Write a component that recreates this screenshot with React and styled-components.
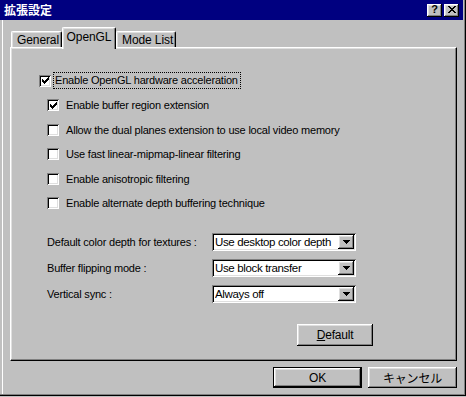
import React from "react";
import styled, { createGlobalStyle } from "styled-components";

const Global = createGlobalStyle`
  html, body { margin: 0; padding: 0; background: #c0c0c0; }
  body { font-family: "Liberation Sans", Arial, sans-serif; font-size: 11px; color: #000; }
  * { box-sizing: border-box; }
`;

const raised = `
  box-shadow: inset -1px -1px #000, inset 1px 1px #fff, inset -2px -2px #808080, inset 2px 2px #dfdfdf;
`;
const sunken = `
  box-shadow: inset 1px 1px #808080, inset -1px -1px #fff, inset 2px 2px #000, inset -2px -2px #dfdfdf;
`;

const Window = styled.div`
  width: 466px;
  height: 396px;
  background: #c0c0c0;
  display: flex;
  flex-direction: column;
  border-right: 1px solid #000;
  border-bottom: 1px solid #000;
  padding: 0 2px 2px 0;
  box-shadow: inset -1px -1px #808080, inset 2px 0 #c0c0c0, inset 3px 0 #fff;
`;

const TitleBar = styled.div`
  height: 20px;
  background: #000080;
  display: flex;
  align-items: center;
  padding: 0 4px 0 4px;
`;

const Title = styled.span`
  flex: 1;
  color: #fff;
  font-family: "Noto Sans CJK JP", "Liberation Sans", sans-serif;
  font-weight: bold;
  font-size: 12px;
  line-height: 20px;
`;

const CaptionButtons = styled.div`
  display: flex;
  gap: 2px;
`;

const CaptionButton = styled.div`
  width: 15px;
  height: 13px;
  background: #c0c0c0;
  ${raised}
  display: flex;
  align-items: center;
  justify-content: center;
  font-family: "Liberation Sans", Arial, sans-serif;
  font-weight: bold;
  font-size: 11px;
  line-height: 1;
  padding-bottom: 1px;
`;

const Content = styled.div`
  flex: 1;
  display: flex;
  flex-direction: column;
  align-items: flex-start;
  padding: 6px 0 0 10px;
`;

const TabStrip = styled.div`
  height: 21px;
  display: flex;
  align-items: flex-end;
  padding-left: 1px;
`;

const Tab = styled.div`
  position: relative;
  width: ${(p) => p.$w}px;
  height: ${(p) => (p.$active ? 22 : 16)}px;
  margin-bottom: ${(p) => (p.$active ? -2 : 0)}px;
  z-index: ${(p) => (p.$active ? 2 : 0)};
  background: #c0c0c0;
  border-top: 1px solid #fff;
  border-left: 1px solid #fff;
  border-right: 1px solid #000;
  border-radius: 2px 2px 0 0;
  box-shadow: inset -1px 0 #808080, inset 1px 1px #dfdfdf;
  display: flex;
  align-items: ${(p) => (p.$active ? "flex-start" : "center")};
  justify-content: ${(p) => (p.$active ? "center" : "flex-start")};
  padding: ${(p) => (p.$active ? "2px 0 0 0" : "0 0 0 5px")};
  font-size: 12px;
  letter-spacing: -0.1px;
`;

const Panel = styled.div`
  width: 447px;
  height: 314px;
  background: #c0c0c0;
  border-top: 1px solid #fff;
  border-left: 1px solid #fff;
  border-right: 1px solid #000;
  border-bottom: 1px solid #000;
  box-shadow: inset -1px -1px #808080, inset 1px 1px #dfdfdf;
  display: flex;
  flex-direction: column;
  align-items: flex-start;
  padding-top: 24px;
`;

const MainRow = styled.div`
  display: flex;
  align-items: center;
  height: 17px;
  margin-left: 28px;
  gap: 2px;
`;

const FocusLabel = styled.span`
  border: 1px dotted #000;
  padding: 0 2px 0 1px;
  height: 17px;
  line-height: 15px;
  letter-spacing: -0.2px;
`;

const SubList = styled.div`
  display: flex;
  flex-direction: column;
  margin: 4px 0 0 36px;
`;

const SubRow = styled.div`
  height: 24.5px;
  display: flex;
  align-items: center;
  gap: 7px;
`;

const Label = styled.span`
  letter-spacing: -0.2px;
  white-space: nowrap;
`;

const Box = styled.div`
  width: 12px;
  height: 12px;
  background: #fff;
  ${sunken}
  display: flex;
  align-items: center;
  justify-content: center;
  flex-shrink: 0;
`;

const Fields = styled.div`
  display: grid;
  grid-template-columns: 165px 144px;
  grid-auto-rows: 18px;
  row-gap: 8px;
  align-items: center;
  margin: 17px 0 0 36px;
`;

const Select = styled.div`
  height: 18px;
  background: #fff;
  ${sunken}
  display: flex;
  align-items: center;
  padding: 2px 2px 2px 3px;
`;

const SelectText = styled.span`
  flex: 1;
  font-size: 11.5px;
  letter-spacing: -0.35px;
  white-space: nowrap;
  overflow: hidden;
`;

const DropButton = styled.div`
  width: 16px;
  height: 14px;
  background: #c0c0c0;
  ${raised}
  display: flex;
  align-items: center;
  justify-content: center;
  flex-shrink: 0;
`;

const Button = styled.div`
  width: ${(p) => p.$w}px;
  height: ${(p) => p.$h}px;
  background: #c0c0c0;
  ${(p) =>
    p.$default
      ? `border: 1px solid #000; box-shadow: inset -1px -1px #000, inset 1px 1px #fff, inset -2px -2px #808080, inset 2px 2px #dfdfdf;`
      : raised}
  display: flex;
  align-items: center;
  justify-content: center;
  font-size: 12px;
  font-family: ${(p) =>
    p.$cjk
      ? `"Noto Sans CJK JP", "Liberation Sans", sans-serif`
      : `"Liberation Sans", Arial, sans-serif`};
  letter-spacing: -0.2px;
`;

const DefaultWrap = styled.div`
  margin: 21px 0 0 286px;
`;

const Footer = styled.div`
  width: 447px;
  display: flex;
  justify-content: flex-end;
  gap: 6px;
  margin-top: 6px;
`;

const U = styled.span`
  text-decoration: underline;
`;

const Check = () => (
  <svg width="7" height="7" viewBox="0 0 7 7" shapeRendering="crispEdges">
    <path
      fill="#000"
      d="M6 0h1v1h-1z M5 1h2v1h-2z M0 2h1v1h-1z M4 2h3v1h-3z M0 3h2v1h-2z M3 3h3v1h-3z M0 4h5v1h-5z M1 5h3v1h-3z M2 6h1v1h-1z"
    />
  </svg>
);

const Arrow = () => (
  <svg width="7" height="4" viewBox="0 0 7 4" shapeRendering="crispEdges">
    <path fill="#000" d="M0 0h7v1h-7z M1 1h5v1h-5z M2 2h3v1h-3z M3 3h1v1h-1z" />
  </svg>
);

const CloseGlyph = () => (
  <svg width="8" height="7" viewBox="0 0 8 7" shapeRendering="crispEdges">
    <path
      fill="#000"
      d="M0 0h2v1h-2z M6 0h2v1h-2z M1 1h2v1h-2z M5 1h2v1h-2z M2 2h4v1h-4z M3 3h2v1h-2z M2 4h4v1h-4z M1 5h2v1h-2z M5 5h2v1h-2z M0 6h2v1h-2z M6 6h2v1h-2z"
    />
  </svg>
);

const subs = [
  { label: "Enable buffer region extension", checked: true },
  { label: "Allow the dual planes extension to use local video memory", checked: false },
  { label: "Use fast linear-mipmap-linear filtering", checked: false },
  { label: "Enable anisotropic filtering", checked: false },
  { label: "Enable alternate depth buffering technique", checked: false },
];

const fields = [
  { label: "Default color depth for textures :", value: "Use desktop color depth" },
  { label: "Buffer flipping mode :", value: "Use block transfer" },
  { label: "Vertical sync :", value: "Always off" },
];

export default function App() {
  return (
    <>
      <Global />
      <Window>
        <TitleBar>
          <Title>拡張設定</Title>
          <CaptionButtons>
            <CaptionButton>?</CaptionButton>
            <CaptionButton>
              <CloseGlyph />
            </CaptionButton>
          </CaptionButtons>
        </TitleBar>
        <Content>
          <TabStrip>
            <Tab $w={51}>General</Tab>
            <Tab $w={54} $active>
              OpenGL
            </Tab>
            <Tab $w={60}>Mode List</Tab>
          </TabStrip>
          <Panel>
            <MainRow>
              <Box>
                <Check />
              </Box>
              <FocusLabel>Enable OpenGL hardware acceleration</FocusLabel>
            </MainRow>
            <SubList>
              {subs.map((s) => (
                <SubRow key={s.label}>
                  <Box>{s.checked && <Check />}</Box>
                  <Label>{s.label}</Label>
                </SubRow>
              ))}
            </SubList>
            <Fields>
              {fields.map((f) => (
                <React.Fragment key={f.label}>
                  <Label>{f.label}</Label>
                  <Select>
                    <SelectText>{f.value}</SelectText>
                    <DropButton>
                      <Arrow />
                    </DropButton>
                  </Select>
                </React.Fragment>
              ))}
            </Fields>
            <DefaultWrap>
              <Button $w={76} $h={22}>
                <U>D</U>efault
              </Button>
            </DefaultWrap>
          </Panel>
          <Footer>
            <Button $w={89} $h={21} $default>
              OK
            </Button>
            <Button $w={89} $h={21} $cjk>
              キャンセル
            </Button>
          </Footer>
        </Content>
      </Window>
    </>
  );
}
